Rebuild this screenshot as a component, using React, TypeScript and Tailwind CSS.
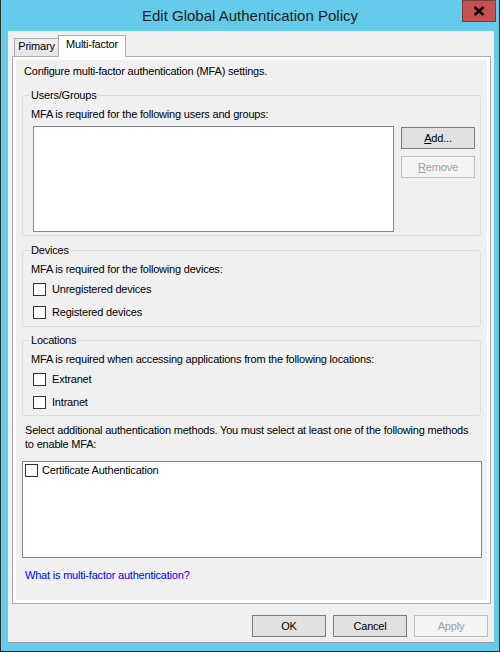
import { ReactNode } from "react";

function Box() {
  return <span className="block h-[13px] w-[13px] shrink-0 border border-[#333333] bg-white" />;
}

function Check({ label, className = "" }: { label: string; className?: string }) {
  return (
    <div className={`flex h-[15px] items-center ${className}`}>
      <Box />
      <span className="ml-[6px]">{label}</span>
    </div>
  );
}

function Group({
  title,
  children,
  className = "",
}: {
  title: string;
  children: ReactNode;
  className?: string;
}) {
  return (
    <fieldset className={`mx-[6px] rounded-[3px] border border-[#dcdcdc] pl-[8px] pr-[5px] ${className}`}>
      <legend className="-ml-[1px] px-[1px] leading-[15px]">{title}</legend>
      {children}
    </fieldset>
  );
}

function Btn({
  children,
  disabled = false,
  className = "",
}: {
  children: ReactNode;
  disabled?: boolean;
  className?: string;
}) {
  return (
    <div
      className={`flex h-[22px] w-[74px] items-center justify-center border leading-[15px] ${
        disabled
          ? "border-[#bfbfbf] bg-[#f4f4f4] text-[#a0a0a0]"
          : "border-[#7a7a7a] bg-[#e1e1e1] text-black"
      } ${className}`}
    >
      {children}
    </div>
  );
}

export default function App() {
  return (
    <div className="flex h-[652px] w-[500px] flex-col border-x border-b border-[#2b2b2b] bg-[#65cbea] font-['Liberation_Sans',Arial,sans-serif] text-[11px] tracking-[-0.2px] text-black">
      {/* title bar */}
      <div className="grid h-[31px] shrink-0 grid-cols-[1fr_auto_1fr]">
        <div />
        <div className="self-center text-[15px] leading-[18px] tracking-normal text-[#1e1e1e]">
          Edit Global Authentication Policy
        </div>
        <div className="flex justify-end">
          <div className="mr-[3px] flex h-[22px] w-[34px] items-center justify-center border border-[#7a3b3b] bg-[#c75050]">
            <svg width="12" height="10" viewBox="0 0 12 10">
              <path d="M1.5 1 L10.5 9 M10.5 1 L1.5 9" stroke="#000" strokeWidth="2.4" />
            </svg>
          </div>
        </div>
      </div>

      {/* client area */}
      <div className="ml-[7px] mr-[5px] flex h-[612px] shrink-0 flex-col border-b border-[#9a9aa6] bg-[#f0f0f0]">
        {/* tabs */}
        <div className="relative z-10 ml-[6px] mt-[4px] flex h-[21px] items-end">
          <div className="flex h-[18px] w-[45px] justify-center border-x border-t border-[#acacac] bg-gradient-to-b from-[#f0f0f0] to-[#e5e5e5] leading-[15px]">
            Primary
          </div>
          <div className="-mb-[1px] -ml-[1px] flex h-[22px] w-[68px] justify-center border-x border-t border-[#acacac] bg-white pt-[1px] leading-[15px]">
            Multi-factor
          </div>
        </div>

        {/* panel */}
        <div className="ml-[4px] h-[548px] w-[479px] border border-[#acacac] bg-white p-[3px]">
          <div className="flex h-full flex-col bg-[#f0f0f0] leading-[15px]">
            <div className="ml-[8px] mt-[4px]">Configure multi-factor authentication (MFA) settings.</div>

            <Group title="Users/Groups" className="mt-[9px] pb-[3px]">
              <div className="mt-[4px]">MFA is required for the following users and groups:</div>
              <div className="mt-[4px] flex">
                <div className="ml-[2px] h-[106px] w-[361px] border border-[#828790] bg-white" />
                <div className="ml-[7px] mt-[1px] flex flex-col gap-[7px]">
                  <Btn>
                    <span>
                      <u>A</u>dd...
                    </span>
                  </Btn>
                  <Btn disabled>
                    <span>
                      <u>R</u>emove
                    </span>
                  </Btn>
                </div>
              </div>
            </Group>

            <Group title="Devices" className="mt-[7px] pb-[6px]">
              <div className="mt-[4px]">MFA is required for the following devices:</div>
              <Check label="Unregistered devices" className="ml-[2px] mt-[5px]" />
              <Check label="Registered devices" className="ml-[2px] mt-[8px]" />
            </Group>

            <Group title="Locations" className="mt-[6px] pb-[5px]">
              <div className="mt-[4px]">MFA is required when accessing applications from the following locations:</div>
              <Check label="Extranet" className="ml-[2px] mt-[5px]" />
              <Check label="Intranet" className="ml-[2px] mt-[8px]" />
            </Group>

            <div className="ml-[9px] mt-[7px] whitespace-nowrap leading-[14px]">
              Select additional authentication methods. You must select at least one of the following methods
              <br />
              to enable MFA:
            </div>

            <div className="ml-[6px] mt-[10px] h-[97px] w-[460px] border border-[#828790] bg-white pl-[2px] pt-[1px]">
              <div className="flex h-[15px] items-center">
                <Box />
                <span className="ml-[4px]">Certificate Authentication</span>
              </div>
            </div>

            <div className="ml-[9px] mt-[10px] text-[#0000ff]">What is multi-factor authentication?</div>
          </div>
        </div>

        {/* footer buttons */}
        <div className="mr-[6px] mt-[11px] flex justify-end gap-[7px]">
          <Btn>OK</Btn>
          <Btn>Cancel</Btn>
          <Btn disabled>Apply</Btn>
        </div>
      </div>
    </div>
  );
}
